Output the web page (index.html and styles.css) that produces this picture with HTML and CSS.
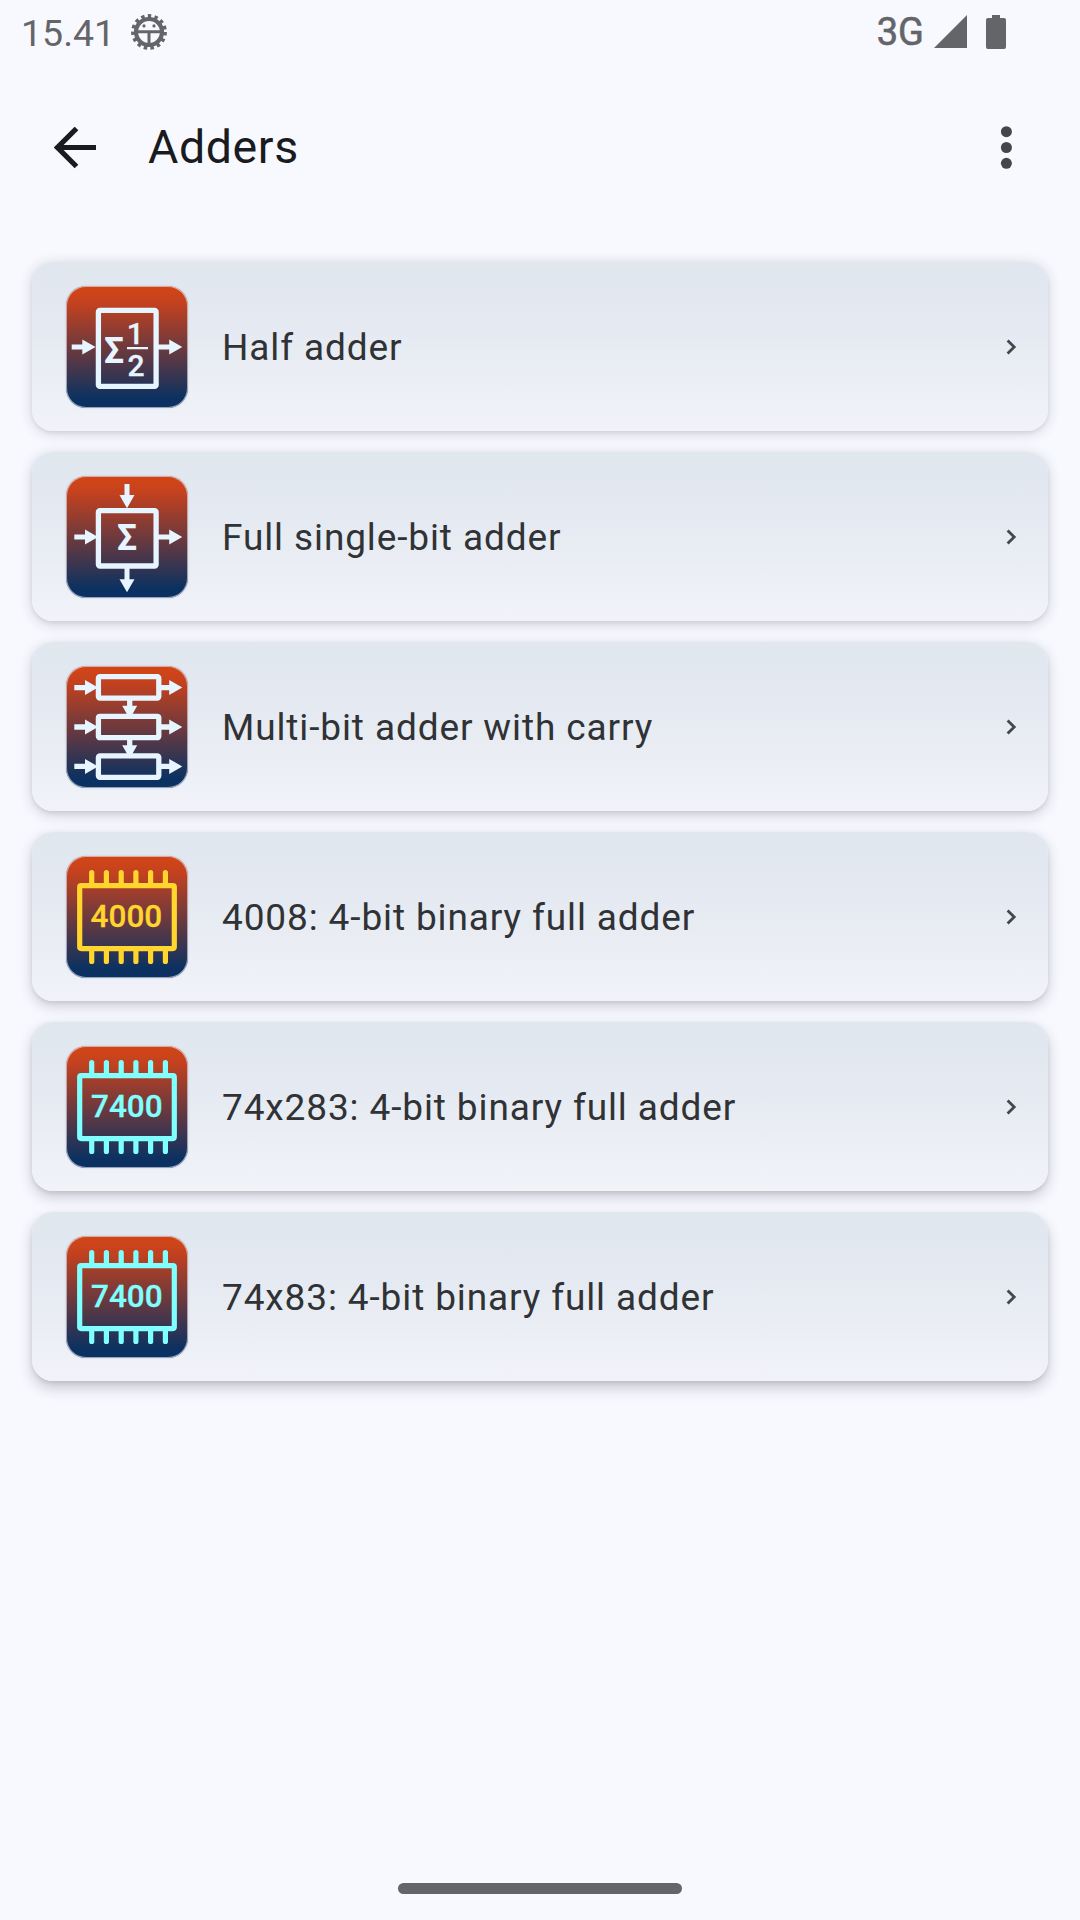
FILE: index.html
```html
<!DOCTYPE html>
<html lang="en">

<head>
    <meta charset="UTF-8">
    <meta name="viewport" content="width=device-width, initial-scale=1.0">
    <title>Adders</title>
    <link rel="stylesheet" href="styles.css">
</head>

<body>

    <!-- Shared icon parts -->
    <svg class="defs" width="0" height="0">
        <symbol id="chip" viewBox="0 0 122 122">
            <g fill="none" stroke="currentColor" stroke-width="5.2" stroke-linecap="round" stroke-linejoin="round">
                <rect x="13.7" y="29.6" width="94.6" height="63" rx="1.5" />
                <path d="M25.7 29V16.5M40.4 29V16.5M55.2 29V16.5M69.9 29V16.5M84.6 29V16.5M99.4 29V16.5" />
                <path d="M25.7 93V105.5M40.4 93V105.5M55.2 93V105.5M69.9 93V105.5M84.6 93V105.5M99.4 93V105.5" />
            </g>
        </symbol>
    </svg>

    <div class="status-bar">
        <span class="clock">15.41</span>
        <svg class="debug-icon" width="38" height="38" viewBox="0 0 38 38">
            <circle cx="19" cy="19" r="15.9" fill="none" stroke="#646568" stroke-width="4" stroke-dasharray="3.4 3.26" />
            <circle cx="19" cy="19" r="13" fill="none" stroke="#646568" stroke-width="4.2" />
            <path d="M6 18.8h26M19 19v13" stroke="#646568" stroke-width="3" />
            <circle cx="14" cy="12.9" r="1.6" fill="#646568" />
            <circle cx="24" cy="12.9" r="1.6" fill="#646568" />
        </svg>
        <span class="network">3G</span>
        <svg class="signal" width="33" height="33" viewBox="0 0 33 33">
            <path d="M0 33L33 0V33Z" fill="#646568" />
        </svg>
        <svg class="battery" width="20" height="34" viewBox="0 0 20 34">
            <path d="M6 0h8v3h4a2 2 0 0 1 2 2v27a2 2 0 0 1-2 2H2a2 2 0 0 1-2-2V5a2 2 0 0 1 2-2h4z" fill="#646568" />
        </svg>
    </div>

    <div class="app-bar">
        <svg class="back" width="42" height="42" viewBox="0 0 42 42">
            <path d="M42 20.5H4M22.5 1.5L3.5 20.5L22.5 39.5" fill="none" stroke="#191b20" stroke-width="5.2" />
        </svg>
        <h1>Adders</h1>
        <svg class="menu" width="12" height="44" viewBox="0 0 12 44">
            <g fill="#45464c">
                <circle cx="6.4" cy="5.7" r="5.5" />
                <circle cx="6.4" cy="21.5" r="5.5" />
                <circle cx="6.4" cy="37.3" r="5.5" />
            </g>
        </svg>
    </div>

    <div class="list">
        <div class="card level-1">
            <svg class="icon" viewBox="0 0 122 122">
                <rect x="32.4" y="24.4" width="57.7" height="76" rx="1.5" fill="none" stroke="currentColor" stroke-width="5.3" />
                <path d="M5.7 61H18M92 61H105" stroke="currentColor" stroke-width="5" />
                <path d="M16.3 53.5L29.6 61L16.3 68.5ZM103.2 53.5L116.3 61L103.2 68.5Z" fill="currentColor" />
                <text class="sigma" x="38" y="76.7" textLength="20" lengthAdjust="spacingAndGlyphs">Σ</text>
                <text class="fraction" x="60.8" y="58">1</text>
                <path d="M61 62.2H82" stroke="currentColor" stroke-width="2.3" />
                <text class="fraction" x="61.6" y="89.8">2</text>
            </svg>
            <span class="label">Half adder</span>
            <svg class="chevron" viewBox="0 0 11 16"><path d="M1.6 1.4L8.2 8L1.6 14.6" /></svg>
        </div>

        <div class="card level-2">
            <svg class="icon" viewBox="0 0 122 122">
                <rect x="32.4" y="34.6" width="57.7" height="55.4" rx="1.5" fill="none" stroke="currentColor" stroke-width="5.3" />
                <path d="M8.3 61H21M92 61H105M61 8V21M61 92V105" stroke="currentColor" stroke-width="5" />
                <path d="M19 53.5L32 61L19 68.5ZM103.2 53.5L116.3 61L103.2 68.5Z" fill="currentColor" />
                <path d="M53.5 19L61 32.3L68.5 19ZM53.5 103.2L61 116.3L68.5 103.2Z" fill="currentColor" />
                <text class="sigma" x="51" y="74.4" textLength="20" lengthAdjust="spacingAndGlyphs">Σ</text>
            </svg>
            <span class="label">Full single-bit adder</span>
            <svg class="chevron" viewBox="0 0 11 16"><path d="M1.6 1.4L8.2 8L1.6 14.6" /></svg>
        </div>

        <div class="card level-3">
            <svg class="icon" viewBox="0 0 122 122">
                <g fill="none" stroke="currentColor" stroke-width="5.3">
                    <rect x="32.4" y="10.7" width="60.4" height="21.4" rx="1.5" />
                    <rect x="32.4" y="50.3" width="60.4" height="21.4" rx="1.5" />
                    <rect x="32.4" y="89.9" width="60.4" height="21.4" rx="1.5" />
                    <path d="M8.3 21.6H21M8.3 61H21M8.3 100.4H21" />
                    <path d="M95 21.6H105M95 61H105M95 100.4H105" />
                    <path d="M63.7 32V42M63.7 72V81" />
                </g>
                <g fill="currentColor">
                    <path d="M19 14.1L32 21.6L19 29.1ZM19 53.5L32 61L19 68.5ZM19 92.9L32 100.4L19 107.9Z" />
                    <path d="M103.2 14.1L116.3 21.6L103.2 29.1ZM103.2 53.5L116.3 61L103.2 68.5ZM103.2 92.9L116.3 100.4L103.2 107.9Z" />
                    <path d="M56.2 39.7L63.7 53L71.2 39.7ZM56.2 79.2L63.7 92.5L71.2 79.2Z" />
                </g>
            </svg>
            <span class="label">Multi-bit adder with carry</span>
            <svg class="chevron" viewBox="0 0 11 16"><path d="M1.6 1.4L8.2 8L1.6 14.6" /></svg>
        </div>

        <div class="card level-4">
            <svg class="icon cmos" viewBox="0 0 122 122">
                <use href="#chip" />
                <text class="series" x="60.4" y="71.4">4000</text>
            </svg>
            <span class="label">4008: 4-bit binary full adder</span>
            <svg class="chevron" viewBox="0 0 11 16"><path d="M1.6 1.4L8.2 8L1.6 14.6" /></svg>
        </div>

        <div class="card level-5">
            <svg class="icon ttl" viewBox="0 0 122 122">
                <use href="#chip" />
                <text class="series" x="60.8" y="71.4">7400</text>
            </svg>
            <span class="label">74x283: 4-bit binary full adder</span>
            <svg class="chevron" viewBox="0 0 11 16"><path d="M1.6 1.4L8.2 8L1.6 14.6" /></svg>
        </div>

        <div class="card level-6">
            <svg class="icon ttl" viewBox="0 0 122 122">
                <use href="#chip" />
                <text class="series" x="60.8" y="71.4">7400</text>
            </svg>
            <span class="label">74x83: 4-bit binary full adder</span>
            <svg class="chevron" viewBox="0 0 11 16"><path d="M1.6 1.4L8.2 8L1.6 14.6" /></svg>
        </div>
    </div>

    <div class="home-indicator"></div>

</body>

</html>
```
FILE: styles.css
```css
* {
    box-sizing: border-box;
}

body {
    margin: 0;
    width: 1080px;
    height: 1920px;
    display: flex;
    flex-direction: column;
    background: #f8f9ff;
    font-family: Roboto, sans-serif;
    overflow: hidden;
}

.defs {
    display: none;
}

.status-bar {
    height: 63px;
    padding: 0 74px 0 21px;
    display: flex;
    align-items: center;
    color: #646568;
}

.clock {
    width: 109px;
    padding-top: 3px;
    font-size: 37.5px;
}

.network {
    margin-left: auto;
    margin-right: 10px;
    font-size: 38px;
    -webkit-text-stroke: 0.6px #646568;
}

.signal {
    margin-right: 19px;
}

.app-bar {
    height: 169px;
    padding: 0 68px 0 54px;
    display: flex;
    align-items: center;
}

.app-bar h1 {
    margin: 0 auto 0 52px;
    padding-bottom: 2px;
    font-size: 46.5px;
    font-weight: 400;
    line-height: 58px;
    letter-spacing: 0.6px;
    color: #191b20;
}

.list {
    margin-top: 30px;
    padding: 0 32px;
    display: flex;
    flex-direction: column;
    gap: 21px;
}

.card {
    height: 169px;
    padding: 0 31px 0 34px;
    display: flex;
    align-items: center;
    border-radius: 21px;
    background: linear-gradient(#e0e7ef, #e4e9f2 35%, #e9edf3 60%, #f1f3f9);
}

/* Shadows get heavier towards the bottom of the screen */
.level-1 { box-shadow: 0 2px 14px rgba(30, 30, 45, 0.17), 0 2px 4px rgba(30, 30, 45, 0.08); }
.level-2 { box-shadow: 0 3px 14px rgba(30, 30, 45, 0.18), 0 2px 4px rgba(30, 30, 45, 0.08); }
.level-3 { box-shadow: 0 4px 14px rgba(30, 30, 45, 0.19), 0 2px 4px rgba(30, 30, 45, 0.09); }
.level-4 { box-shadow: 0 5px 14px rgba(30, 30, 45, 0.2), 0 2px 4px rgba(30, 30, 45, 0.09); }
.level-5 { box-shadow: 0 6px 14px rgba(30, 30, 45, 0.21), 0 2px 4px rgba(30, 30, 45, 0.1); }
.level-6 { box-shadow: 0 7px 14px rgba(30, 30, 45, 0.22), 0 2px 4px rgba(30, 30, 45, 0.1); }

.icon {
    width: 122px;
    height: 122px;
    border-radius: 20px;
    background: linear-gradient(#d04518 4%, #c3411f 14%, #0a3161 93%);
    box-shadow: inset 0 0 0 1px rgba(225, 225, 235, 0.65), 0 0 2px rgba(120, 120, 150, 0.3);
    color: #e6f5ff;
}

.icon text {
    fill: currentColor;
}

.icon.cmos {
    color: #ffd52e;
}

.icon.ttl {
    color: #80ffff;
}

.sigma {
    font-size: 37px;
    font-weight: 700;
}

.fraction {
    font-size: 30px;
    font-weight: 500;
    stroke: currentColor;
    stroke-width: 0.3px;
}

.series {
    font-size: 31.5px;
    font-weight: 500;
    stroke: currentColor;
    stroke-width: 0.3px;
    text-anchor: middle;
}

.label {
    flex: 1;
    margin-left: 34px;
    padding-top: 2px;
    font-size: 37px;
    letter-spacing: 0.88px;
    color: #303235;
}

.chevron {
    width: 11px;
    height: 16px;
}

.chevron path {
    fill: none;
    stroke: #45474b;
    stroke-width: 2.8;
}

.home-indicator {
    width: 284px;
    height: 11px;
    margin: auto auto 26px;
    border-radius: 6px;
    background: #646568;
}
```
